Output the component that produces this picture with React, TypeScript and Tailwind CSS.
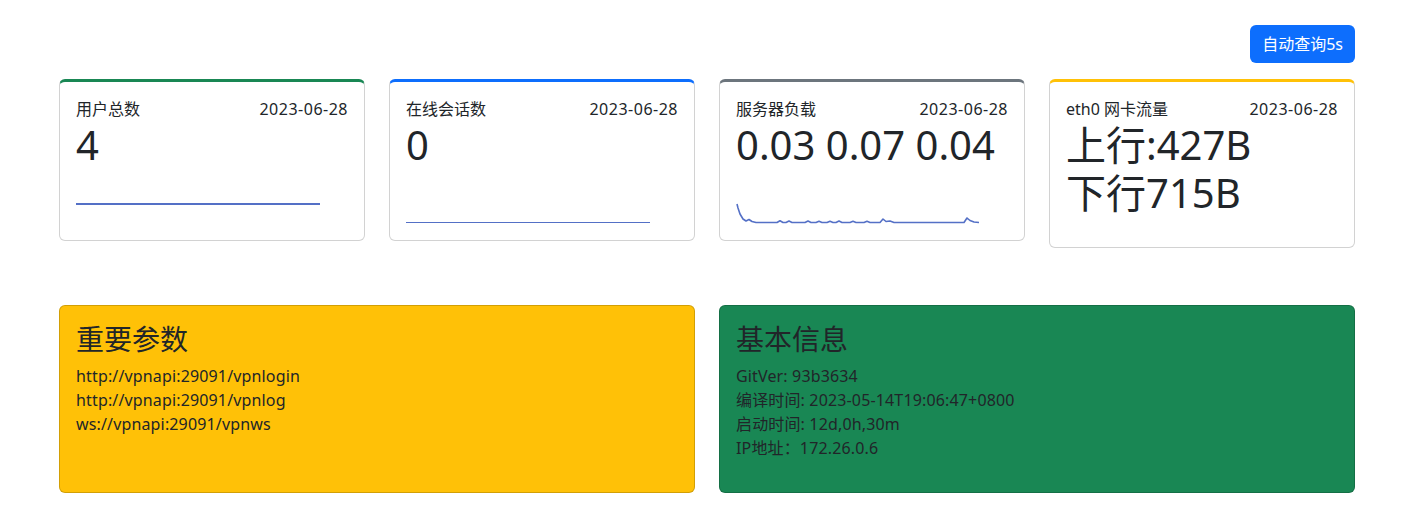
import React from "react";

const font = { fontFamily: '"Noto Sans", "Noto Sans CJK SC", sans-serif' };

function Line({ y, w }: { y: number; w: number }) {
  return (
    <svg width="245" height="55" className="block">
      <line x1="0" y1={y} x2="244" y2={y} stroke="#5470c6" strokeWidth={w} />
    </svg>
  );
}

function LoadChart() {
  const b = 53.5;
  const pts: [number, number][] = [
    [1, 35], [2, 39], [4, 45], [7, 50], [10, 52], [13, 50.5], [16, 52.5], [20, b],
    [41, b], [44, 51.8], [47, b], [50, b], [53, 52], [56, b], [69, b], [72, 52], [75, b],
    [80, b], [83, 52.2], [86, b], [91, b], [94, 52.2], [97, b], [100, b], [103, 52], [106, b],
    [114, b], [117, 52.3], [120, b], [128, b], [131, 52.3], [134, b], [144, b], [147, 50], [150, 52.5],
    [154, 52], [158, b], [228, b], [231, 49], [234, 51.5], [238, 53], [243, b],
  ];
  return (
    <svg width="245" height="55" className="block">
      <polyline
        points={pts.map((p) => p.join(",")).join(" ")}
        fill="none"
        stroke="#5470c6"
        strokeWidth={1.6}
        strokeLinejoin="round"
      />
    </svg>
  );
}

function StatCard({
  color,
  title,
  children,
  h,
}: {
  color: string;
  title: string;
  children: React.ReactNode;
  h: string;
}) {
  return (
    <div
      className={`w-[306px] ${h} rounded-md border border-black/[0.175] border-t-[3px] bg-white px-4 pt-[15px] pb-4 text-[#212529]`}
      style={{ borderTopColor: color }}
    >
      <div className="flex justify-between text-base leading-6">
        <span>{title}</span>
        <span className="tracking-[0.5px]">2023-06-28</span>
      </div>
      {children}
    </div>
  );
}

export default function App() {
  return (
    <div className="min-h-[520px] bg-white" style={font}>
      <div className="ml-[59px] w-[1296px] pt-[25px]">
        <div className="flex justify-end">
          <button className="h-[38px] rounded-md bg-[#0d6efd] px-3 text-base leading-6 text-white">
            自动查询5s
          </button>
        </div>
        <div className="mt-4 flex items-start gap-6">
          <StatCard color="#198754" title="用户总数" h="h-[162px]">
            <div className="text-[40px] leading-[48px]">4</div>
            <Line y={35} w={2} />
          </StatCard>
          <StatCard color="#0d6efd" title="在线会话数" h="h-[162px]">
            <div className="text-[40px] leading-[48px]">0</div>
            <Line y={53.5} w={1.2} />
          </StatCard>
          <StatCard color="#6c757d" title="服务器负载" h="h-[162px]">
            <div className="text-[40px] leading-[48px]">0.03 0.07 0.04</div>
            <LoadChart />
          </StatCard>
          <StatCard color="#ffc107" title="eth0 网卡流量" h="h-[169px]">
            <div className="text-[40px] leading-[48px]">上行:427B</div>
            <div className="text-[40px] leading-[48px]">下行715B</div>
          </StatCard>
        </div>
        <div className="mt-[57px] flex gap-6">
          <div className="h-[188px] w-[636px] rounded-md border border-black/[0.175] bg-[#ffc107] p-4 text-[#212529]">
            <div className="mb-2 text-[28px] leading-[34px]">重要参数</div>
            <div className="text-base leading-6 tracking-[0.15px]">http://vpnapi:29091/vpnlogin</div>
            <div className="text-base leading-6 tracking-[0.15px]">http://vpnapi:29091/vpnlog</div>
            <div className="text-base leading-6 tracking-[0.15px]">ws://vpnapi:29091/vpnws</div>
          </div>
          <div className="h-[188px] w-[636px] rounded-md border border-black/[0.175] bg-[#198754] p-4 text-[#212529]">
            <div className="mb-2 text-[28px] leading-[34px]">基本信息</div>
            <div className="text-base leading-6 tracking-[0.15px]">GitVer: 93b3634</div>
            <div className="text-base leading-6 tracking-[0.15px]">编译时间: 2023-05-14T19:06:47+0800</div>
            <div className="text-base leading-6 tracking-[0.15px]">启动时间: 12d,0h,30m</div>
            <div className="text-base leading-6 tracking-[0.15px]">IP地址：172.26.0.6</div>
          </div>
        </div>
      </div>
    </div>
  );
}
